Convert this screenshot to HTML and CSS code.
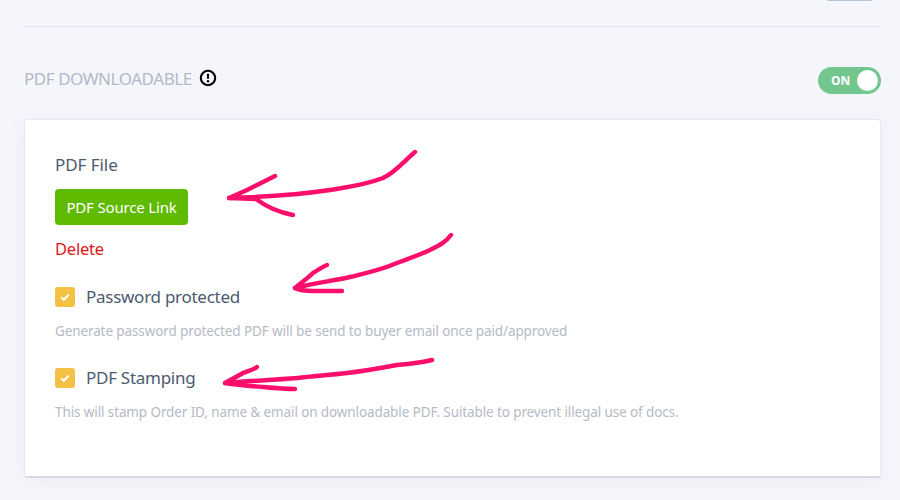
FILE: index.html
```html
<!DOCTYPE html>
<html lang="en">
<head>
    <meta charset="UTF-8">
    <meta name="viewport" content="width=device-width, initial-scale=1.0">
    <title>PDF Downloadable</title>
    <link rel="stylesheet" href="styles.css">
</head>
<body>

<!-- Stub of the toggle above the divider -->
<div class="top-stub"></div>
<hr class="divider">

<!-- Section header -->
<header class="section-head">
    <h2 class="section-title">PDF DOWNLOADABLE</h2>
    <svg class="info-icon" width="18" height="18" viewBox="0 0 18 18" aria-hidden="true">
        <circle cx="9" cy="9" r="7.2" fill="none" stroke="#000" stroke-width="2.1"/>
        <path d="M9 4.8v5" fill="none" stroke="#000" stroke-width="2.1"/>
        <circle cx="9" cy="12.3" r="1.2" fill="#000"/>
    </svg>
    <div class="toggle">
        <span class="toggle-text">ON</span>
        <span class="toggle-knob"></span>
    </div>
</header>

<!-- Card -->
<main class="card">
    <p class="field-label">PDF File</p>
    <a class="source-btn" href="#">PDF Source Link</a>
    <a class="delete-link" href="#">Delete</a>

    <label class="check-row">
        <span class="check-box">
            <svg width="12" height="12" viewBox="0 0 12 12" aria-hidden="true"><path d="M2.2 6.3l2.6 2.5 5-5.2" fill="none" stroke="#fff" stroke-width="2.2"/></svg>
        </span>
        <span class="check-label">Password protected</span>
    </label>
    <p class="help-text">Generate password protected PDF will be send to buyer email once paid/approved</p>

    <label class="check-row">
        <span class="check-box">
            <svg width="12" height="12" viewBox="0 0 12 12" aria-hidden="true"><path d="M2.2 6.3l2.6 2.5 5-5.2" fill="none" stroke="#fff" stroke-width="2.2"/></svg>
        </span>
        <span class="check-label">PDF Stamping</span>
    </label>
    <p class="help-text">This will stamp Order ID, name &amp; email on downloadable PDF. Suitable to prevent illegal use of docs.</p>
</main>

<!-- Hand drawn arrows on top of the page -->
<svg class="scribbles" width="900" height="500" viewBox="0 0 900 500" aria-hidden="true">
    <g fill="none" stroke="#fc0f6c" stroke-width="4.4" stroke-linecap="round" stroke-linejoin="round">
        <path d="M415 152C404 161 396 172 383 178C365 185 348 187 330 190C296 195 262 197 229 198L247 190L275 176"/>
        <path d="M229 198L256 199Q272 211 293 215"/>
        <path d="M451 235C445 243 438 246 430 250C419 255 408 259 397 263C381 270 366 273 350 277C332 281 314 283 295 288C302 282 308 278 313 273C318 270 322 267 327 265"/>
        <path d="M295 288C301 291 307 291 313 291L342 291"/>
        <path d="M432 360C420 363 409 364 397 365C381 368 364 371 347 373C330 375 314 376 297 378C273 380 249 381 225 383C232 379 238 376 243 373C248 371 253 370 257 367"/>
        <path d="M225 383C238 385 250 386 263 387C274 388 285 389 295 389"/>
    </g>
</svg>

</body>
</html>
```

FILE: styles.css
```css
html, body {
    height: 100%;
}

body {
    margin: 0;
    padding: 0 19px 0 24px;
    height: 500px;
    box-sizing: border-box;
    overflow: hidden;
    background: #f4f6fb;
    font-family: "Noto Sans", Arial, sans-serif;
    color: #4b5a6e;
}

.top-stub {
    width: 45px;
    height: 1px;
    margin-left: auto;
    margin-right: 9px;
    border-radius: 0 0 4px 4px;
    background: #b8c6dc;
}

.divider {
    margin: 25px 0 0;
    border: 0;
    height: 1px;
    background: #dde1ea;
}

.section-head {
    display: flex;
    align-items: center;
    height: 27px;
    margin-top: 40px;
}

.section-title {
    margin: 0 0 5px;
    font-size: 17px;
    font-weight: 400;
    letter-spacing: -0.45px;
    color: #b3b9c6;
}

.info-icon {
    margin-left: 7px;
    margin-top: -5px;
}

.toggle {
    display: flex;
    align-items: center;
    justify-content: space-between;
    box-sizing: border-box;
    width: 63px;
    height: 27px;
    margin-left: auto;
    padding: 0 3px 0 13px;
    border-radius: 14px;
    background: #74c68f;
}

.toggle-text {
    font-size: 12px;
    font-weight: 700;
    color: #fff;
}

.toggle-knob {
    width: 21px;
    height: 21px;
    border-radius: 50%;
    background: #fff;
}

.card {
    box-sizing: border-box;
    height: 359px;
    margin-top: 25px;
    padding: 33px 30px 0;
    background: #fff;
    border: 1px solid #e6e9f0;
    border-bottom: 2px solid #d6dae5;
    border-radius: 3px;
    box-shadow: 0 2px 18px rgba(70, 80, 120, 0.05);
}

.field-label {
    margin: 0;
    font-size: 17px;
    line-height: 24px;
    letter-spacing: -0.05px;
}

.source-btn {
    display: block;
    width: 133px;
    height: 36px;
    margin-top: 12px;
    border-radius: 4px;
    background: #5fba00;
    color: #fff;
    font-size: 15px;
    line-height: 36px;
    letter-spacing: -0.17px;
    text-align: center;
    text-decoration: none;
}

.delete-link {
    display: block;
    margin-top: 12px;
    font-size: 16.5px;
    line-height: 24px;
    letter-spacing: -0.2px;
    color: #dc1620;
    text-decoration: none;
}

.check-row {
    display: flex;
    align-items: center;
    gap: 11px;
    margin-top: 24px;
}

.check-box {
    display: flex;
    align-items: center;
    justify-content: center;
    width: 20px;
    height: 20px;
    border-radius: 3px;
    background: #f4c145;
}

.check-label {
    font-size: 17px;
    letter-spacing: -0.27px;
}

.help-text {
    margin: 13px 0 0;
    font-size: 13.5px;
    line-height: 20px;
    letter-spacing: -0.11px;
    color: #b5bac6;
}

.help-text + .check-row {
    margin-top: 25px;
}

/* Arrows drawn over the screenshot */
.scribbles {
    position: absolute;
    top: 0;
    left: 0;
    pointer-events: none;
}
```
